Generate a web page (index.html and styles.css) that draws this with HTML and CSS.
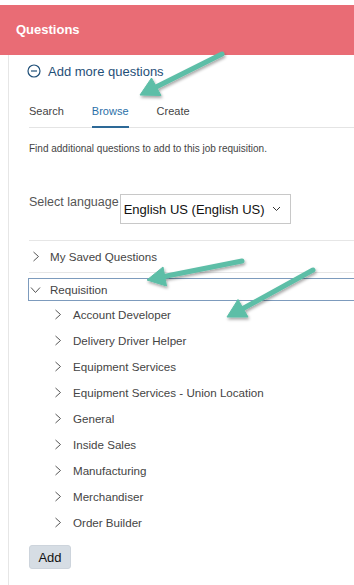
FILE: index.html
```html
<!DOCTYPE html>
<html lang="en">
<head>
    <meta charset="UTF-8">
    <meta name="viewport" content="width=device-width, initial-scale=1.0">
    <title>Questions</title>
    <link rel="stylesheet" href="styles.css">
</head>
<body>
    <div class="header">Questions</div>

    <div class="panel">
        <div class="add-more">
            <svg class="minus-icon" width="14" height="14" viewBox="0 0 14 14">
                <circle cx="7" cy="7" r="6" fill="none" stroke="#1f4f78" stroke-width="1.2"/>
                <line x1="4" y1="7" x2="10" y2="7" stroke="#1f4f78" stroke-width="1.2"/>
            </svg>
            <span>Add more questions</span>
        </div>

        <div class="tabs">
            <span class="tab">Search</span>
            <span class="tab active">Browse</span>
            <span class="tab">Create</span>
        </div>

        <p class="hint">Find additional questions to add to this job requisition.</p>

        <div class="lang-row">
            <span class="lang-label">Select language</span>
            <div class="select-box">
                <span>English US (English US)</span>
                <svg width="9" height="6" viewBox="0 0 9 6">
                    <polyline points="1,1 4.5,4.5 8,1" fill="none" stroke="#333" stroke-width="1"/>
                </svg>
            </div>
        </div>

        <div class="tree">
            <div class="tree-row saved">
                <svg class="chev" width="8" height="11" viewBox="0 0 8 11"><polyline points="1.5,1 6.5,5.5 1.5,10" fill="none" stroke="#555" stroke-width="1"/></svg>
                <span>My Saved Questions</span>
            </div>
            <div class="tree-row open">
                <svg class="chev" width="11" height="8" viewBox="0 0 11 8"><polyline points="1,1.5 5.5,6.5 10,1.5" fill="none" stroke="#555" stroke-width="1"/></svg>
                <span>Requisition</span>
            </div>
            <div class="sub-list">
                <div class="tree-row sub"><svg class="chev" width="8" height="11" viewBox="0 0 8 11"><polyline points="1.5,1 6.5,5.5 1.5,10" fill="none" stroke="#555" stroke-width="1"/></svg><span>Account Developer</span></div>
                <div class="tree-row sub"><svg class="chev" width="8" height="11" viewBox="0 0 8 11"><polyline points="1.5,1 6.5,5.5 1.5,10" fill="none" stroke="#555" stroke-width="1"/></svg><span>Delivery Driver Helper</span></div>
                <div class="tree-row sub"><svg class="chev" width="8" height="11" viewBox="0 0 8 11"><polyline points="1.5,1 6.5,5.5 1.5,10" fill="none" stroke="#555" stroke-width="1"/></svg><span>Equipment Services</span></div>
                <div class="tree-row sub"><svg class="chev" width="8" height="11" viewBox="0 0 8 11"><polyline points="1.5,1 6.5,5.5 1.5,10" fill="none" stroke="#555" stroke-width="1"/></svg><span>Equipment Services - Union Location</span></div>
                <div class="tree-row sub"><svg class="chev" width="8" height="11" viewBox="0 0 8 11"><polyline points="1.5,1 6.5,5.5 1.5,10" fill="none" stroke="#555" stroke-width="1"/></svg><span>General</span></div>
                <div class="tree-row sub"><svg class="chev" width="8" height="11" viewBox="0 0 8 11"><polyline points="1.5,1 6.5,5.5 1.5,10" fill="none" stroke="#555" stroke-width="1"/></svg><span>Inside Sales</span></div>
                <div class="tree-row sub"><svg class="chev" width="8" height="11" viewBox="0 0 8 11"><polyline points="1.5,1 6.5,5.5 1.5,10" fill="none" stroke="#555" stroke-width="1"/></svg><span>Manufacturing</span></div>
                <div class="tree-row sub"><svg class="chev" width="8" height="11" viewBox="0 0 8 11"><polyline points="1.5,1 6.5,5.5 1.5,10" fill="none" stroke="#555" stroke-width="1"/></svg><span>Merchandiser</span></div>
                <div class="tree-row sub"><svg class="chev" width="8" height="11" viewBox="0 0 8 11"><polyline points="1.5,1 6.5,5.5 1.5,10" fill="none" stroke="#555" stroke-width="1"/></svg><span>Order Builder</span></div>
            </div>
        </div>

        <button class="add-btn" type="button">Add</button>
    </div>

    <!-- annotation arrows drawn over the screenshot -->
    <svg class="annotations" width="354" height="585" viewBox="0 0 354 585">
        <defs>
            <filter id="shadow" x="-20%" y="-20%" width="140%" height="140%">
                <feDropShadow dx="1" dy="2" stdDeviation="1.5" flood-color="#000" flood-opacity="0.35"/>
            </filter>
        </defs>
        <g fill="#5dbea7" stroke="#5dbea7" filter="url(#shadow)">
            <line x1="222" y1="54" x2="156" y2="87" stroke-width="5" stroke-linecap="round"/>
            <polygon points="140,95 161,95.5 151.5,78" stroke-width="1" stroke-linejoin="round"/>

            <line x1="242" y1="261" x2="164" y2="276.5" stroke-width="5" stroke-linecap="round"/>
            <polygon points="147,280 166.5,286 163,267" stroke-width="1" stroke-linejoin="round"/>

            <line x1="313" y1="270" x2="243" y2="308.5" stroke-width="5" stroke-linecap="round"/>
            <polygon points="227,317 248,317 238,299.5" stroke-width="1" stroke-linejoin="round"/>
        </g>
    </svg>
</body>
</html>
```

FILE: styles.css
```css
body {
    margin: 0;
    padding-top: 5px;
    font-family: "Liberation Sans", Arial, sans-serif;
    background-color: #fff;
    color: #333;
    width: 354px;
    height: 585px;
    overflow: hidden;
    position: relative;
}
.header {
    height: 50px;
    line-height: 50px;
    padding-left: 16px;
    background-color: #e96c75;
    color: #fff;
    font-weight: bold;
    font-size: 13px;
}
.panel {
    margin-left: 8px;
    border-left: 1px solid #e6e6e6;
    padding-left: 20px;
    padding-top: 7px;
    height: 530px;
}
.add-more {
    display: flex;
    align-items: center;
    gap: 7px;
    margin-left: -2px;
    height: 18px;
    color: #1f4f78;
    font-size: 13px;
}
.tabs {
    display: flex;
    gap: 28px;
    margin-top: 25px;
    border-bottom: 1px solid #e4e4e4;
    font-size: 11px;
}
.tab {
    padding-bottom: 9px;
    color: #444;
    border-bottom: 2px solid transparent;
    margin-bottom: -1px;
}
.tab.active {
    color: #2a6fa8;
    border-bottom-color: #2d6997;
}
.hint {
    margin: 15px 0 0;
    font-size: 10px;
    color: #444;
}
.lang-row {
    display: flex;
    align-items: flex-start;
    margin-top: 40px;
}
.lang-label {
    font-size: 12.5px;
    color: #555;
    padding-top: 1px;
}
.select-box {
    display: flex;
    align-items: center;
    justify-content: space-between;
    margin-left: 1px;
    width: 157px;
    height: 28px;
    padding: 0 9px 0 3px;
    border: 1px solid #c8c8c8;
    font-size: 13px;
    color: #111;
}
.tree {
    margin-top: 16px;
    border-top: 1px solid #e6e6e6;
}
.tree-row {
    display: flex;
    align-items: center;
    font-size: 11.6px;
    color: #444;
}
.tree-row .chev {
    flex-shrink: 0;
}
.tree-row.saved {
    height: 31px;
    padding-left: 3px;
    gap: 10px;
    border-bottom: 1px solid #e6e6e6;
}
.tree-row.open {
    height: 21px;
    margin-top: 5px;
    margin-right: -10px;
    padding-left: 1px;
    gap: 9px;
    border: 1px solid #7d9bbd;
    margin-left: -1px;
}
.sub-list {
    padding-left: 25px;
}
.tree-row.sub {
    height: 26px;
    gap: 11px;
}
.add-btn {
    display: block;
    margin-top: 10px;
    width: 42px;
    height: 24px;
    padding: 0;
    border: 1px solid #cdd4dc;
    border-radius: 3px;
    background-color: #d6dde4;
    font-family: "Liberation Sans", Arial, sans-serif;
    font-size: 13px;
    color: #111;
}
.annotations {
    position: absolute;
    left: 0;
    top: 0;
    pointer-events: none;
}
```
